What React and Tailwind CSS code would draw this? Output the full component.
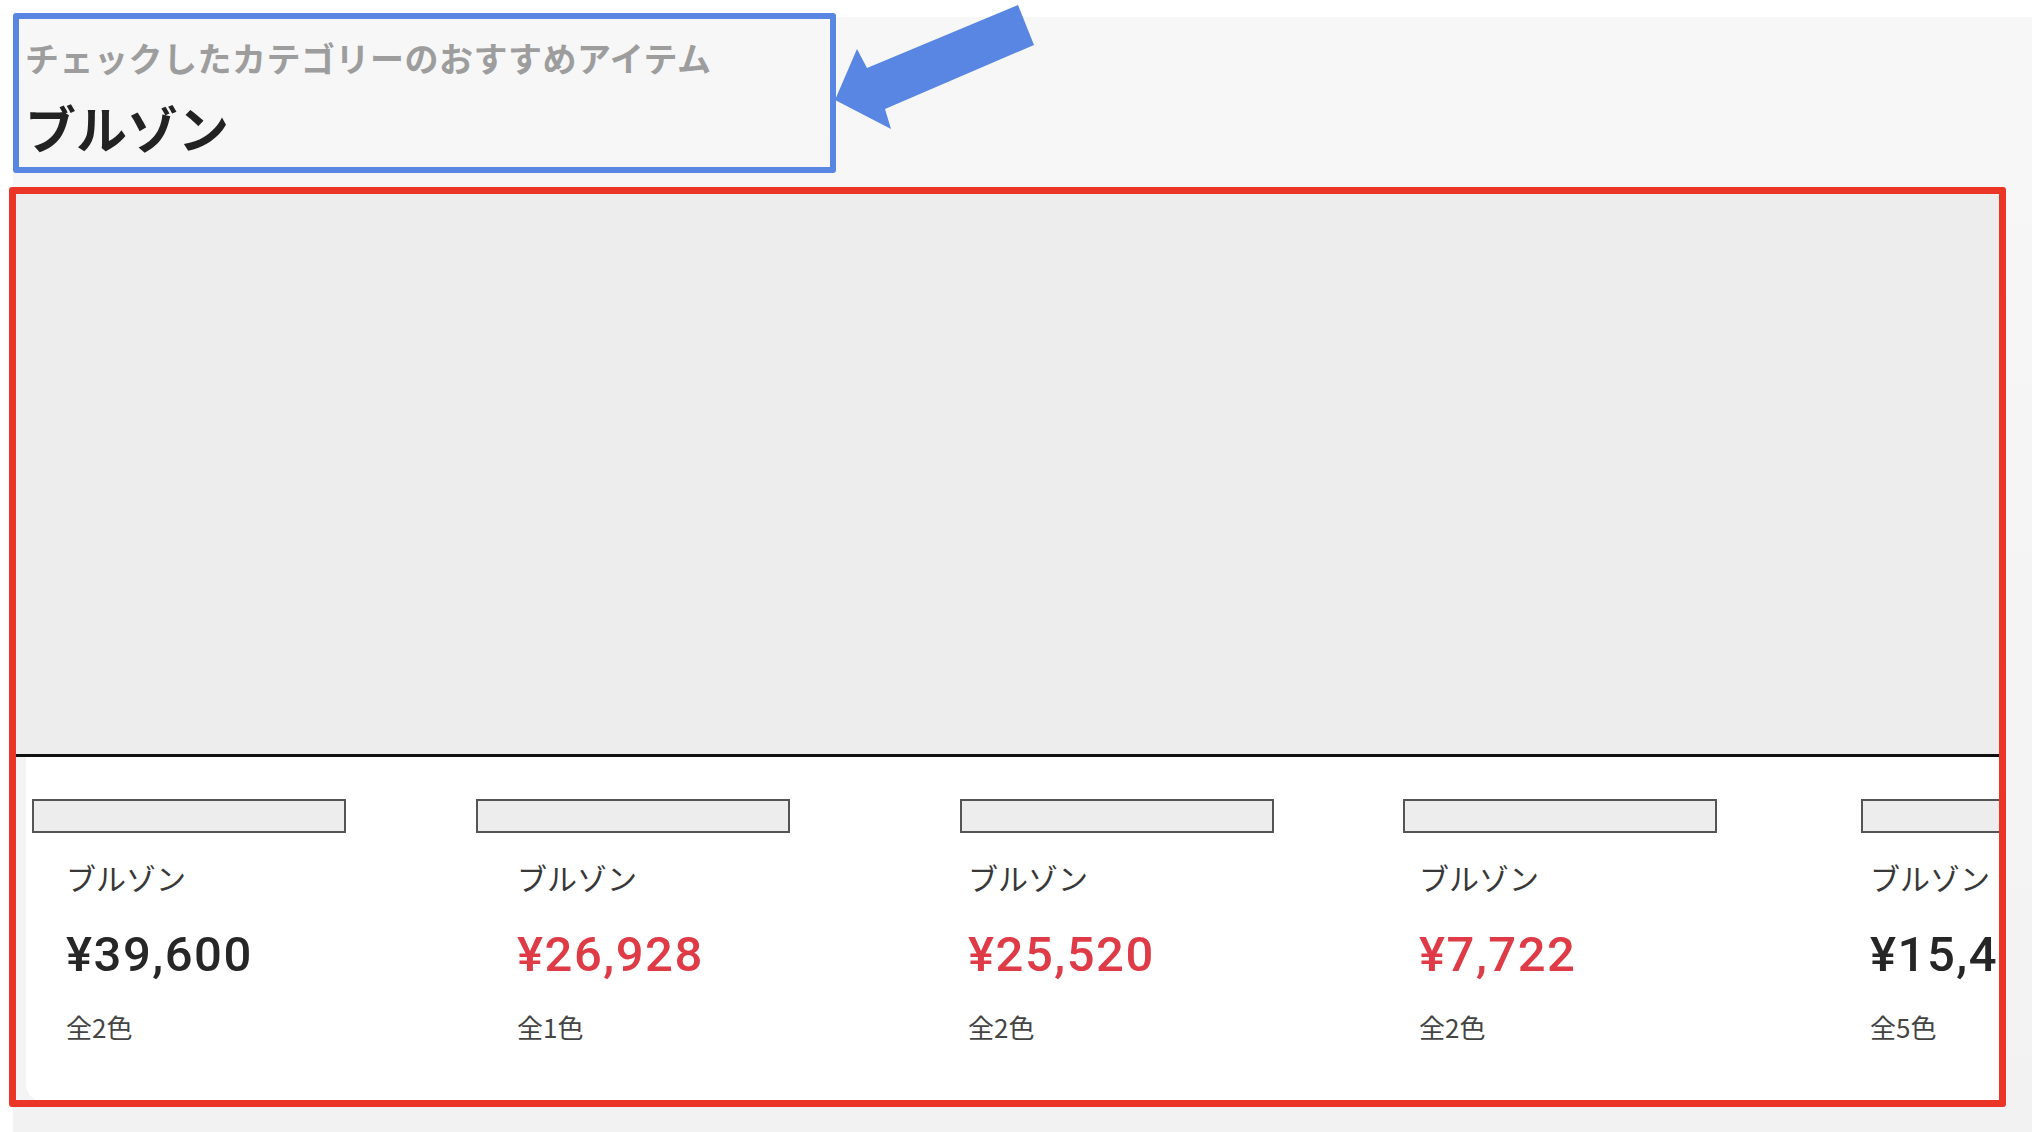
import React from 'react'

const items = [
  { name: 'ブルゾン', price: '¥39,600', sale: false, colors: '全2色', bar: 'ml-[0px]' },
  { name: 'ブルゾン', price: '¥26,928', sale: true, colors: '全1色', bar: '-ml-[7px]' },
  { name: 'ブルゾン', price: '¥25,520', sale: true, colors: '全2色', bar: 'ml-[26px]' },
  { name: 'ブルゾン', price: '¥7,722', sale: true, colors: '全2色', bar: 'ml-[18px]' },
  { name: 'ブルゾン', price: '¥15,400', sale: false, colors: '全5色', bar: 'ml-[25px]' },
]

const ItemCard = ({ item }) => (
  <div className="flex w-[451px] shrink-0 flex-col">
    <div className={`h-[34px] w-[314px] border-2 border-[#555] bg-[#ededed] ${item.bar}`} />
    <p className="ml-[34px] mt-[26px] text-[30px] leading-[36px] text-[#383838]">{item.name}</p>
    <p
      className={`ml-[34px] mt-[35px] whitespace-nowrap font-['Roboto','Noto_Sans_CJK_JP',sans-serif] text-[49px] font-medium leading-[49px] tracking-[1.5px] ${
        item.sale ? 'text-[#df3b46]' : 'text-[#262626]'
      }`}
    >
      {item.price}
    </p>
    <p className="ml-[34px] mt-[33px] text-[26px] leading-[30px] text-[#444]">{item.colors}</p>
  </div>
)

const App = () => {
  return (
    <div className="relative h-[1132px] w-[2032px] overflow-hidden bg-white font-['Noto_Sans_CJK_JP',sans-serif]">
      <div className="h-full pl-[13px] pt-[17px]">
        <div className="h-full bg-linear-to-b from-[#f7f7f7] to-[#f2f2f2] pt-[20px]">
          <div className="pl-[12px]">
            <p className="text-[34px] font-bold leading-[42px] tracking-[0.5px] text-[#9d9d9d]">チェックしたカテゴリーのおすすめアイテム</p>
            <h2 className="mt-[18px] text-[51px] font-bold leading-[61px] text-[#222]">ブルゾン</h2>
          </div>

          <div className="ml-[3px] mr-[32px] mt-[36px] overflow-hidden">
            <div className="h-[560px] bg-[#ededed]" />
            <div className="h-[3px] bg-[#111]" />
            <div className="h-[345px] bg-[#f4f4f4]">
              <div className="ml-[10px] h-full rounded-bl-[18px] bg-white">
                <div className="flex pl-[6px] pt-[42px]">
                  {items.map((item, i) => (
                    <ItemCard key={i} item={item} />
                  ))}
                </div>
              </div>
            </div>
          </div>
        </div>
      </div>

      {/* annotation overlays */}
      <div className="absolute left-[13px] top-[13px] h-[160px] w-[823px] rounded-[3px] border-[6px] border-[#5886e2]" />
      <svg className="absolute left-[820px] top-0" width="240" height="150" viewBox="0 0 240 150">
        <polygon points="15,100 37,49 47,68 198,5 214,45 65,109 71,129" fill="#5886e2" />
      </svg>
      <div className="absolute left-[9px] top-[187px] h-[920px] w-[1997px] rounded-[3px] border-[7px] border-[#eb3527]" />
    </div>
  )
}

export default App
